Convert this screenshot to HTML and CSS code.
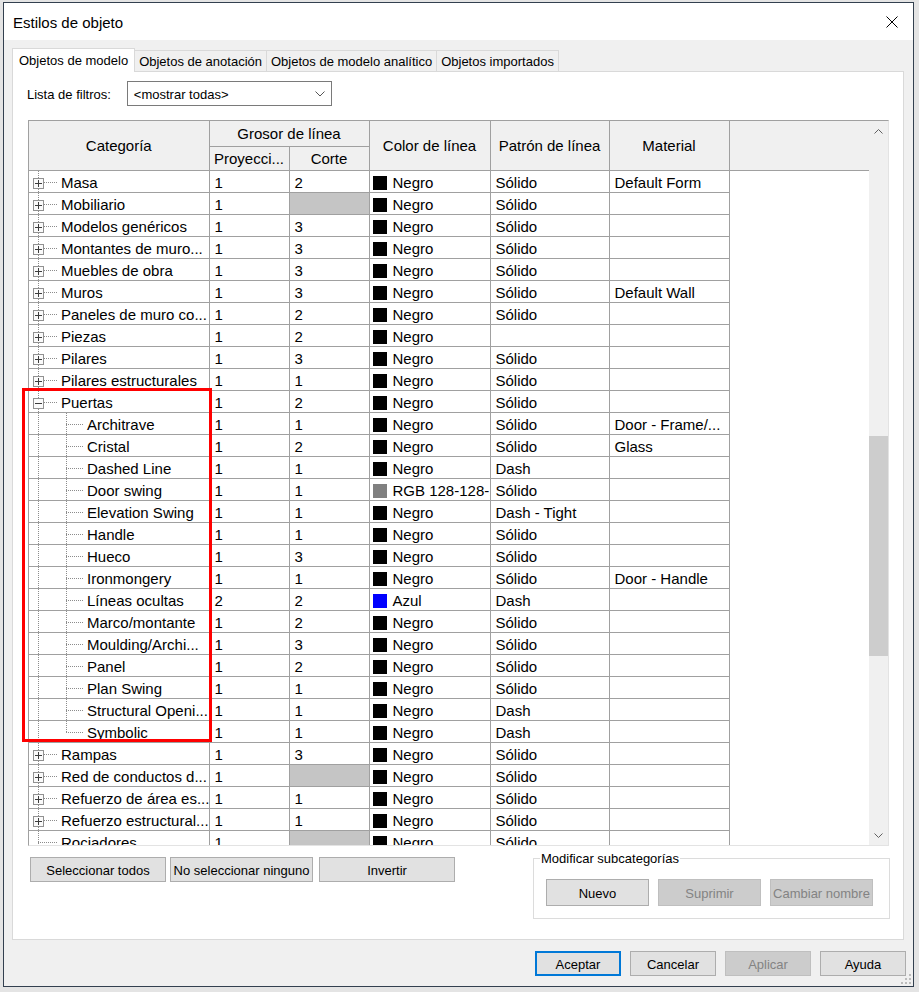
FILE: index.html
```html
<!DOCTYPE html>
<html>
	<head>
		<meta charset="UTF-8">
		<title>Estilos de objeto</title>
		<link rel="stylesheet" href="styles.css">
	</head>
	<body>
		<div class="win">
			<div class="titlebar">
				<span class="title">Estilos de objeto</span>
				<svg class="close" width="12" height="12" viewBox="0 0 12 12"><path d="M0.5 0.5L11.5 11.5M11.5 0.5L0.5 11.5" stroke="#000" stroke-width="1" fill="none"/></svg>
			</div>
			<div class="client">
				<div class="tabs">
					<div class="tab on">Objetos de modelo</div>
					<div class="tab">Objetos de anotación</div>
					<div class="tab">Objetos de modelo analítico</div>
					<div class="tab">Objetos importados</div>
				</div>
				<div class="panel">
					<div class="filter">
						<span class="lbl">Lista de filtros:</span>
						<div class="combo">
							<span>&lt;mostrar todas&gt;</span>
							<svg width="10" height="6" viewBox="0 0 10 6"><path d="M0.5 0.5L5 5L9.5 0.5" stroke="#555" fill="none"/></svg>
						</div>
					</div>
					<div class="grid">
						<div class="view">
							<table class="styles">
								<colgroup>
									<col style="width:180px"><col style="width:80px"><col style="width:80px"><col style="width:121px"><col style="width:119px"><col style="width:120px"><col>
								</colgroup>
								<thead>
									<tr class="h1">
										<th rowspan="2">Categoría</th>
										<th colspan="2">Grosor de línea</th>
										<th rowspan="2">Color de línea</th>
										<th rowspan="2">Patrón de línea</th>
										<th rowspan="2">Material</th>
										<th rowspan="2" class="thfill"></th>
									</tr>
									<tr class="h2">
										<th>Proyecci...</th>
										<th>Corte</th>
									</tr>
								</thead>
								<tbody id="rows"></tbody>
							</table>
						</div>
						<div class="vscroll">
							<div class="arrow"><svg width="9" height="5" viewBox="0 0 9 5"><path d="M0.5 4.5L4.5 0.5L8.5 4.5" stroke="#606060" fill="none"/></svg></div>
							<div class="track"><div class="thumb"></div></div>
							<div class="arrow"><svg width="9" height="5" viewBox="0 0 9 5"><path d="M0.5 0.5L4.5 4.5L8.5 0.5" stroke="#606060" fill="none"/></svg></div>
						</div>
					</div>
					<div class="mark"></div>
					<div class="actions">
						<div class="sel">
							<button class="b-all">Seleccionar todos</button>
							<button class="b-none">No seleccionar ninguno</button>
							<button class="b-inv">Invertir</button>
						</div>
						<fieldset class="subcat">
							<legend>Modificar subcategorías</legend>
							<div class="subbtns">
								<button>Nuevo</button>
								<button disabled>Suprimir</button>
								<button disabled>Cambiar nombre</button>
							</div>
						</fieldset>
					</div>
				</div>
				<div class="footer">
					<button class="default">Aceptar</button>
					<button>Cancelar</button>
					<button disabled>Aplicar</button>
					<button>Ayuda</button>
				</div>
			</div>
			<svg class="grip" width="12" height="12" viewBox="0 0 12 12">
				<rect x="9" y="1" width="2" height="2" fill="#bcbcbc"/>
				<rect x="5" y="5" width="2" height="2" fill="#bcbcbc"/><rect x="9" y="5" width="2" height="2" fill="#bcbcbc"/>
				<rect x="1" y="9" width="2" height="2" fill="#bcbcbc"/><rect x="5" y="9" width="2" height="2" fill="#bcbcbc"/><rect x="9" y="9" width="2" height="2" fill="#bcbcbc"/>
			</svg>
		</div>
		<script type="text/javascript">
			// tipo: p = cerrado, o = abierto, c = hijo, e = ultimo hijo, l = sin hijos
			var rows=[
				['p','Masa','1','2','k','Negro','Sólido','Default Form'],
				['p','Mobiliario','1','#','k','Negro','Sólido',''],
				['p','Modelos genéricos','1','3','k','Negro','Sólido',''],
				['p','Montantes de muro...','1','3','k','Negro','Sólido',''],
				['p','Muebles de obra','1','3','k','Negro','Sólido',''],
				['p','Muros','1','3','k','Negro','Sólido','Default Wall'],
				['p','Paneles de muro co...','1','2','k','Negro','Sólido',''],
				['p','Piezas','1','2','k','Negro','',''],
				['p','Pilares','1','3','k','Negro','Sólido',''],
				['p','Pilares estructurales','1','1','k','Negro','Sólido',''],
				['o','Puertas','1','2','k','Negro','Sólido',''],
				['c','Architrave','1','1','k','Negro','Sólido','Door - Frame/...'],
				['c','Cristal','1','2','k','Negro','Sólido','Glass'],
				['c','Dashed Line','1','1','k','Negro','Dash',''],
				['c','Door swing','1','1','g','RGB 128-128-128','Sólido',''],
				['c','Elevation Swing','1','1','k','Negro','Dash - Tight',''],
				['c','Handle','1','1','k','Negro','Sólido',''],
				['c','Hueco','1','3','k','Negro','Sólido',''],
				['c','Ironmongery','1','1','k','Negro','Sólido','Door - Handle'],
				['c','Líneas ocultas','2','2','b','Azul','Dash',''],
				['c','Marco/montante','1','2','k','Negro','Sólido',''],
				['c','Moulding/Archi...','1','3','k','Negro','Sólido',''],
				['c','Panel','1','2','k','Negro','Sólido',''],
				['c','Plan Swing','1','1','k','Negro','Sólido',''],
				['c','Structural Openi...','1','1','k','Negro','Dash',''],
				['e','Symbolic','1','1','k','Negro','Dash',''],
				['p','Rampas','1','3','k','Negro','Sólido',''],
				['p','Red de conductos d...','1','#','k','Negro','Sólido',''],
				['p','Refuerzo de área es...','1','1','k','Negro','Sólido',''],
				['p','Refuerzo estructural...','1','1','k','Negro','Sólido',''],
				['l','Rociadores','1','#','k','Negro','Sólido','']
			];
			var tb=document.getElementById('rows');
			var html='';
			for(var i=0;i<rows.length;i++){
				var r=rows[i];
				var box='';
				if(r[0]=='p'||r[0]=='o'){
					box=`<svg class="bx" width="11" height="11" viewBox="0 0 11 11"><rect x="0.5" y="0.5" width="10" height="10" fill="#fafafa" stroke="#919191"/><path d="${r[0]=='p'?'M2 5.5H9M5.5 2V9':'M2 5.5H9'}" stroke="#3c3c3c"/></svg>`;
				}
				var hatch=r[3]=='#';
				html+=`<tr class="r">
					<td class="cat ${r[0]}">${box}<span class="nm">${r[1]}</span></td>
					<td>${r[2]}</td>
					<td${hatch?' class="hatch"':''}>${hatch?'':r[3]}</td>
					<td class="clr"><i class="sw ${r[4]}"></i>${r[5]}</td>
					<td>${r[6]}</td>
					<td>${r[7]}</td>
					<td class="fill"></td>
				</tr>`;
			}
			tb.innerHTML=html;
		</script>
	</body>
</html>
```

FILE: styles.css
```css
*{
	box-sizing: border-box;
}
body{
	margin: 0;
	padding: 2px 0 0 3px;
	background: #e4e4e4;
	font-family: "Liberation Sans", Arial, sans-serif;
	font-size: 13px;
	color: #000;
}
.win{
	position: relative;
	width: 911px;
	height: 985px;
	border: 1px solid #33404f;
	background: #f0f0f0;
	display: flex;
	flex-direction: column;
}
.titlebar{
	flex: none;
	height: 37px;
	background: #fff;
	display: flex;
	align-items: center;
	justify-content: space-between;
	padding: 1px 15px 0 9px;
}
.title{
	font-size: 15px;
}
.client{
	flex: 1;
	padding: 8px 9px 0 8px;
}

/* pestañas */
.tabs{
	display: flex;
	align-items: flex-end;
	height: 23px;
}
.tab{
	height: 21px;
	line-height: 19px;
	padding: 1px 4px 0;
	margin-left: -1px;
	border: 1px solid #d9d9d9;
	border-bottom: 0;
	background: #f0f0f0;
	white-space: nowrap;
}
.tab.on{
	height: 24px;
	line-height: 21px;
	padding: 1px 6px 0;
	margin: 0 0 -1px 0;
	background: #fff;
	position: relative;
	z-index: 1;
}
.panel{
	position: relative;
	background: #fff;
	border: 1px solid #d9d9d9;
	padding: 9px 14px 20px 15px;
}
.filter{
	display: flex;
	align-items: center;
	height: 25px;
}
.lbl{
	margin: 2px 16px 0 -1px;
}
.combo{
	width: 205px;
	height: 25px;
	border: 1px solid #7a7a7a;
	display: flex;
	align-items: center;
	justify-content: space-between;
	padding: 1px 6px 0 6px;
}

/* rejilla */
.grid{
	display: flex;
	margin-top: 14px;
	width: 861px;
	height: 726px;
	border: 1px solid;
	border-color: #a0a0a0 #e3e3e3 #e3e3e3 #a0a0a0;
}
.view{
	width: 840px;
	overflow: hidden;
	background: #fff;
}
.styles{
	--dv: repeating-linear-gradient(#8c8c8c 0 1px, transparent 1px 2px);
	--dh: repeating-linear-gradient(to right, #8c8c8c 0 1px, transparent 1px 2px);
	border-collapse: collapse;
	table-layout: fixed;
	width: 840px;
	font-size: 15px;
}
.styles th{
	background: #f0f0f0;
	font-weight: normal;
	border: 1px solid #a0a0a0;
	border-top: 0;
	padding: 1px 0 0;
	white-space: nowrap;
	overflow: hidden;
}
.styles th:first-child{
	border-left: 0;
}
.styles .thfill{
	border-right: 0;
}
.h1{
	height: 25px;
}
.h2{
	height: 24px;
}
.r{
	height: 22px;
}
.styles td{
	border: 1px solid #a0a0a0;
	padding: 2px 0 0 5px;
	line-height: 19px;
	vertical-align: top;
	white-space: nowrap;
	overflow: hidden;
}
.styles td.cat{
	border-left: 0;
	padding-left: 4px;
	background-repeat: no-repeat;
}
.styles td.fill{
	border: 0;
}
.cat .bx{
	vertical-align: -1px;
}
.cat.p, .cat.o{
	background-image: var(--dv), var(--dh);
	background-position: 9px 0, 15px 11px;
	background-size: 1px 100%, 14px 1px;
}
.cat.p .nm, .cat.o .nm{
	margin-left: 17px;
}
.styles td.cat.c{
	padding-left: 58px;
	background-image: var(--dv), var(--dv), var(--dh);
	background-position: 9px 0, 37px 0, 37px 11px;
	background-size: 1px 100%, 1px 100%, 17px 1px;
}
.styles td.cat.e{
	padding-left: 58px;
	background-image: var(--dv), var(--dv), var(--dh);
	background-position: 9px 0, 37px 0, 37px 11px;
	background-size: 1px 100%, 1px 12px, 17px 1px;
}
.styles td.cat.l{
	padding-left: 32px;
	background-image: var(--dv), var(--dh);
	background-position: 9px 0, 9px 11px;
	background-size: 1px 100%, 19px 1px;
}
.styles td.clr{
	padding-left: 3px;
}
.sw{
	display: inline-block;
	width: 14px;
	height: 14px;
	margin-right: 6px;
	vertical-align: -2px;
}
.sw.k{
	background: #000;
}
.sw.g{
	background: #808080;
}
.sw.b{
	background: #0000ff;
}
.styles td.hatch{
	background: repeating-conic-gradient(#8a8a8a 0 25%, #fff 0 50%) 0 0 / 2px 2px;
}

/* barra de desplazamiento */
.vscroll{
	width: 19px;
	background: #f0f0f0;
	display: flex;
	flex-direction: column;
}
.arrow{
	height: 20px;
	display: flex;
	align-items: center;
	justify-content: center;
}
.track{
	flex: 1;
}
.thumb{
	margin-top: 295px;
	height: 220px;
	background: #cdcdcd;
}

/* marca roja */
.mark{
	position: absolute;
	left: 9px;
	top: 316px;
	width: 190px;
	height: 354px;
	border: 3px solid #ff0000;
	z-index: 2;
}

/* botones */
button{
	font-family: "Liberation Sans", Arial, sans-serif;
	font-size: 13px;
	color: #000;
	background: #e1e1e1;
	border: 1px solid #adadad;
	padding: 2px 0 0;
	margin: 0;
}
button:disabled{
	background: #cccccc;
	border-color: #bfbfbf;
	color: #838383;
}
.actions{
	display: flex;
	justify-content: space-between;
	margin-top: 5px;
}
.sel{
	display: flex;
	margin: 6px 0 0 2px;
	align-self: flex-start;
}
.sel button{
	width: 136px;
	height: 25px;
}
.sel .b-none{
	width: 143px;
	margin-left: 4px;
}
.sel .b-inv{
	margin-left: 6px;
}
.subcat{
	margin: 0 -1px 0 0;
	width: 357px;
	border: 1px solid #dcdcdc;
	padding: 13px 12px 12px;
}
.subcat legend{
	margin-left: -6px;
	padding: 0 1px;
	line-height: 15px;
}
.subbtns{
	display: flex;
}
.subbtns button{
	width: 103px;
	height: 27px;
}
.subbtns button + button{
	margin-left: 9px;
}
.footer{
	display: flex;
	justify-content: flex-end;
	margin: 11px -2px 0 0;
}
.footer button{
	width: 86px;
	height: 25px;
	margin-left: 9px;
}
.footer .default{
	border: 2px solid #0078d7;
}
.grip{
	position: absolute;
	right: 1px;
	bottom: 1px;
}
```
